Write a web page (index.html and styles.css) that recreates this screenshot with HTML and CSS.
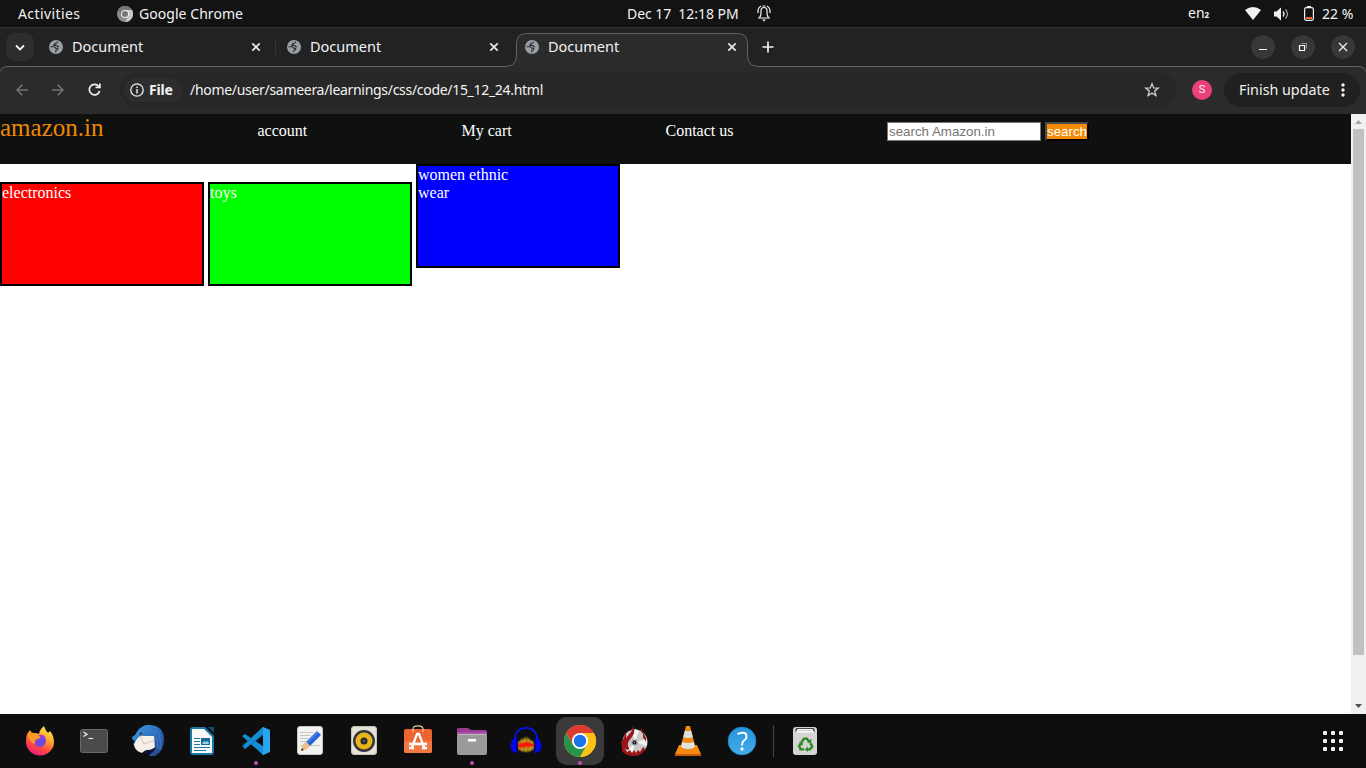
FILE: index.html
```html
<!DOCTYPE html>
<html lang="en">
<head>
<meta charset="utf-8">
<title>Document</title>
<link rel="stylesheet" href="styles.css">
</head>
<body>
<svg class="defs" width="0" height="0">
  <symbol id="globe" viewBox="0 0 14 14"><circle cx="7" cy="7" r="7" fill="#9aa0a6"/><path d="M1.500 6.800H4.800Q6.300 6.900 6.600 8.200H8.600V9.600L6.800 10.300V12.300Q1.600 12 1.500 6.800ZM8.300 1.600V2.400Q8 3.300 6.800 3.300H6V4.500H4.800V5.500H7.600Q8.600 5.600 8.700 6.800H10.200Q11 7 11.200 8.200H12.400Q12.900 3 8.300 1.600Z" fill="#9aa0a6"/><path d="M1.500 6.800H4.800Q6.300 6.900 6.600 8.200H8.600V9.600L6.800 10.300V12.400M8.300 1.600V2.400Q8 3.300 6.800 3.300H6V4.700H4.800V5.500H7.600Q8.600 5.600 8.700 6.800H10.200" fill="none" stroke="#282a2d" stroke-width="1.100"/></symbol>
  <symbol id="close" viewBox="0 0 10 10"><path d="M1.300 1.300 8.700 8.700M8.700 1.300 1.300 8.700" stroke="#e8e8e8" stroke-width="1.700"/></symbol>
</svg>

<header class="topbar">
  <span class="activities">Activities</span>
  <svg class="app-icon" width="16" height="16" viewBox="0 0 16 16"><circle cx="8" cy="8" r="8" fill="#8b8b8b"/><path d="M8 4H15A8 8 0 0 1 8 16L11.500 10Z" fill="#c8c8c8"/><path d="M1 4A8 8 0 0 1 15 4H8L4.500 10Z" fill="#777"/><circle cx="8" cy="8" r="4" fill="#eee"/><circle cx="8" cy="8" r="3" fill="#777"/></svg>
  <span class="app-name">Google Chrome</span>
  <span class="clock">Dec 17&nbsp; 12:18 PM</span>
  <svg class="bell" width="14" height="17" viewBox="0 0 14 17"><path d="M2.500 12.500Q4 11 4 8V6Q4 2.500 7 2.500T10 6V8Q10 11 11.500 12.500M1 13H13M1 8V5Q1.500 2.500 4 1M13 8V5Q12.500 2.500 10 1M5.500 1H8.500" fill="none" stroke="#f2f2f2" stroke-width="1.200"/><path d="M5 14.500H9L7 16.500Z" fill="#f2f2f2"/></svg>
  <span class="lang">en<small>2</small></span>
  <svg class="wifi" width="16" height="13" viewBox="0 0 16 13"><path d="M0 3Q8-3 16 3L8 13Z" fill="#f2f2f2"/></svg>
  <svg class="sound" width="16" height="14" viewBox="0 0 16 14"><path d="M0 4.500H2.500L7 .5V13.500L2.500 9.500H0Z" fill="#f2f2f2"/><path d="M9 4.500Q11 7 9 9.500" fill="none" stroke="#eee" stroke-width="1.300"/><path d="M11.500 2.500Q15.500 7 11.500 11.500" fill="none" stroke="#aaa" stroke-width="1.200"/></svg>
  <svg class="battery" width="10" height="15" viewBox="0 0 10 15"><rect x=".6" y="1.600" width="8.800" height="12.800" rx="1.800" fill="none" stroke="#f2f2f2" stroke-width="1.200"/><path d="M3 0H7V2H3Z" fill="#f2f2f2"/><path d="M2 11H8V13H2Z" fill="#ed6b33"/></svg>
  <span class="percent">22 %</span>
</header>

<section class="browser">
  <svg class="frame" width="1366" height="86" viewBox="0 28 1366 86"><path d="M-1 116V74.500Q0 66.500 8 66.500H505Q516.500 66.500 516.500 55V43.500Q516.500 33.500 526.500 33.500H737.500Q747.500 33.500 747.500 43.500V55Q747.500 66.500 759 66.500H1358Q1366 66.500 1367 74.500V116Z" fill="#2b2b2b" stroke="#626262"/></svg>
  <div class="tabs">
    <span class="tab-menu"><svg width="10" height="7" viewBox="0 0 10 7"><path d="M1 1.500 5 5.500 9 1.500" fill="none" stroke="#f2f2f2" stroke-width="1.800"/></svg></span>
    <div class="tab"><svg class="globe"><use href="#globe"/></svg><span>Document</span><svg class="close"><use href="#close"/></svg></div>
    <div class="tab divided"><svg class="globe"><use href="#globe"/></svg><span>Document</span><svg class="close"><use href="#close"/></svg></div>
    <div class="tab"><svg class="globe"><use href="#globe"/></svg><span>Document</span><svg class="close"><use href="#close"/></svg></div>
    <svg class="plus" width="12" height="12" viewBox="0 0 12 12"><path d="M6 .5V11.500M.5 6H11.500" stroke="#eee" stroke-width="1.700"/></svg>
    <div class="window-buttons">
      <span><svg width="10" height="10" viewBox="0 0 10 10"><path d="M1 7.500H9" stroke="#fff"/></svg></span>
      <span><svg width="10" height="10" viewBox="0 0 10 10"><path d="M3.500 1.500H8.500V6.500" fill="none" stroke="#999"/><path d="M1.500 3.500H6.500V8.500H1.500Z" fill="none" stroke="#fff" stroke-width="1.200"/></svg></span>
      <span><svg width="10" height="10" viewBox="0 0 10 10"><path d="M1 1 9 9M9 1 1 9" stroke="#eee" stroke-width="1.300"/></svg></span>
    </div>
  </div>
  <div class="toolbar">
    <svg class="arrow" width="12" height="12" viewBox="0 0 12 12"><path d="M12 6H1.200M6.300 .8 1.100 6 6.300 11.200" fill="none" stroke="#747474" stroke-width="1.500"/></svg>
    <svg class="arrow" width="12" height="12" viewBox="0 0 12 12"><path d="M0 6H10.800M5.700 .8 10.900 6 5.700 11.200" fill="none" stroke="#747474" stroke-width="1.500"/></svg>
    <svg class="reload" width="13" height="13" viewBox="0 0 13 13"><path d="M10.700 3.500A5.200 5.200 0 1 0 11.600 8M11.900 .5V4.500H7.500" fill="none" stroke="#f2f2f2" stroke-width="1.700"/></svg>
    <div class="address">
      <span class="file"><svg width="14" height="14" viewBox="0 0 14 14"><circle cx="7" cy="7" r="6.200" fill="none" stroke="#eee" stroke-width="1.300"/><path d="M7 6V10.500M7 3.500V5" stroke="#eee" stroke-width="1.400"/></svg><b>File</b></span>
      <span class="url">/home/user/sameera/learnings/css/code/15_12_24.html</span>
      <svg class="star" width="16" height="16" viewBox="0 0 16 16"><path d="M8 1.800 9.700 5.900 14.200 6.200 10.700 9.100 11.900 13.500 8 11.100 4.100 13.500 5.300 9.100 1.800 6.200 6.300 5.900Z" fill="none" stroke="#c6c6c6" stroke-width="1.400"/></svg>
    </div>
    <span class="avatar">S</span>
    <div class="update"><span>Finish update</span><svg width="4" height="14" viewBox="0 0 4 14"><g fill="#f2f2f2"><circle cx="2" cy="2" r="1.700"/><circle cx="2" cy="7" r="1.700"/><circle cx="2" cy="12" r="1.700"/></g></svg></div>
  </div>
</section>

<main class="viewport">
  <div class="page">
    <nav class="nav">
      <span class="logo">amazon.in</span>
      <span class="account">account</span>
      <span class="cart">My cart</span>
      <span class="contact">Contact us</span>
      <input class="search" type="text" placeholder="search Amazon.in">
      <button class="go">search</button>
    </nav>
    <div class="categories">
      <div class="box red">electronics</div>
      <div class="box green">toys</div>
      <div class="box blue">women ethnic<br>wear</div>
    </div>
  </div>
  <div class="scrollbar">
    <svg width="15" height="15" viewBox="0 0 15 15"><path d="M4 10H11L7.500 6Z" fill="#a3a3a3"/></svg>
    <div class="thumb"></div>
    <svg class="down" width="15" height="15" viewBox="0 0 15 15"><path d="M4 5H11L7.500 9Z" fill="#505050"/></svg>
  </div>
</main>

<footer class="dock">
  <span class="slot"><svg viewBox="0 0 32 32"><defs><linearGradient id="ff" x1=".8" y1="0" x2=".3" y2="1"><stop offset="0" stop-color="#fff34f"/><stop offset=".4" stop-color="#ffa22c"/><stop offset=".7" stop-color="#ff4b3e"/><stop offset="1" stop-color="#e9197f"/></linearGradient></defs><path d="M3 9 6 5Q7 8 10 8Q13 8 15 9Q16 4 20 1Q21 5 24 8L26 6Q30 11 30 17A14 13.500 0 0 1 2 17Q2 12 3 9Z" fill="url(#ff)"/><circle cx="16" cy="16" r="6" fill="#7647dd"/><path d="M4 10Q9 7 12 10L17 11Q16 14 13 14Q10 16 11 19Q5 17 4 10Z" fill="#ff9a28"/><path d="M15 10Q20 9 22 13Q20 11 16 12" fill="#b833d1"/></svg></span>
  <span class="slot"><svg viewBox="0 0 32 32"><rect x="2.500" y="4.500" width="27" height="23" rx="2" fill="#4b4b4b" stroke="#696969"/><path d="M5.500 7 9 9.200 5.500 11.500M10.500 13.500H15" fill="none" stroke="#f4f4f4" stroke-width="1.200"/></svg></span>
  <span class="slot"><svg viewBox="0 0 32 32"><defs><linearGradient id="tb" x1="0" y1="0" x2="1" y2="1"><stop offset="0" stop-color="#3aa2e8"/><stop offset=".55" stop-color="#2b68b8"/><stop offset="1" stop-color="#283f86"/></linearGradient></defs><path d="M0 12 3 10Q7 2 14 0Q32-1 32 15Q32 26 23 31L17 31 20 27Q8 30 1 19L3 16Q0 15 0 12Z" fill="url(#tb)"/><path d="M2 20Q4 14 8 11L22 11 23 24 17 25Q13 25 10 28 3 26 2 20Z" fill="#f5f1e9"/><path d="M8 11 12 19 23 15" fill="none" stroke="#c8beb0" stroke-width=".9"/><path d="M10 28Q14 24 18 25L24 22Q22 28 17 29Z" fill="#101536"/><circle cx="9" cy="9" r="1.500" fill="#172b50"/><circle cx="9.500" cy="10" r=".8" fill="#e9b450"/><path d="M17 4Q27 8 26 24M23 4Q30 10 28 25" fill="none" stroke="#4b8bd5" stroke-width=".7"/></svg></span>
  <span class="slot"><svg viewBox="0 0 32 32"><path d="M7 2H19L28 11V27Q28 30 25 30H7Q4 30 4 27V5Q4 2 7 2Z" fill="#187aa7"/><path d="M8 4H18L26 12V28H6V4Z" fill="#fafafa"/><path d="M22 2H28V8Z" fill="#164f6e"/><path d="M8 13.500H14M8 16.500H14M8 19.500H14M8 22.500H24M8 25.500H20" stroke="#187aa7"/><rect x="15" y="13" width="9" height="7" fill="#146b95"/><path d="M16 19 18 16 20 17 22 16 23 19Z" fill="#99d5ef"/></svg></span>
  <span class="slot running"><svg viewBox="0 0 32 32"><path d="M2 11 5 9 30 26 23 30Z" fill="#178dd3"/><path d="M2 21 5 24 26 8 23 2Z" fill="#076ead"/><path d="M23 2 30 5V27L23 30Z" fill="#2aa5ef"/><path d="M3 21 23 2V9L5 24Z" fill="#168bd1"/></svg></span>
  <span class="slot"><svg viewBox="0 0 32 32"><rect x="3.500" y="1.500" width="25" height="28" rx="2.500" fill="#f2f2f1" stroke="#c9c5c1"/><path d="M6 7.500H19M6 10.500H17M6 13.500H14M6 16.500H12M6 20.500H26" stroke="#bdb9ae" stroke-width=".8"/><path d="M12 17 23 6 27 10 16 21Z" fill="#2864da"/><path d="M7 26 9 19 12 17 16 21 13 24Z" fill="#f4bd82"/><path d="M7 26 8 23 10 25Z" fill="#333"/><path d="M13 18 24 7" stroke="#5997ff"/></svg></span>
  <span class="slot"><svg viewBox="0 0 32 32"><rect x="3.500" y="1.500" width="25" height="28" rx="2.500" fill="#e6e1d7" stroke="#c8c3b8"/><circle cx="16" cy="16" r="11" fill="#33353a"/><circle cx="16" cy="16" r="8.500" fill="#eab51b"/><circle cx="16" cy="16" r="3.500" fill="#25282c"/><circle cx="16" cy="16" r="1.500" fill="#555"/></svg></span>
  <span class="slot"><svg viewBox="0 0 32 32"><rect x="2" y="4" width="28" height="24" rx="2" fill="#ec6430"/><path d="M2 16H30V26Q30 28 28 28H4Q2 28 2 26Z" fill="#f17a43"/><path d="M11 7V4Q11 .8 16 .8T21 4V7" fill="none" stroke="#ecd3a5" stroke-width="1.200"/><path d="M9.500 23.500 15 9H17L22.500 23.500M7 19H25M7 23H12M20 23H25" fill="none" stroke="#fff" stroke-width="2.300"/></svg></span>
  <span class="slot running"><svg viewBox="0 0 32 32"><path d="M1 4Q1 3 3 3H12L15 5H29Q31 5 31 7V12H1Z" fill="#953d94"/><path d="M1 8H31" stroke="#c065b9"/><rect x="1" y="9" width="30" height="21" rx="2" fill="#9a9a9a"/><path d="M2 9.500H30" stroke="#bebebe"/><rect x="12" y="14" width="8" height="2.500" rx=".5" fill="#fff"/></svg></span>
  <span class="slot"><svg viewBox="0 0 32 32"><path d="M5 20Q3 3 16 3T27 20" fill="none" stroke="#0712dc" stroke-width="2"/><path d="M8 19 9 15 10 17 11 13 12 16 13 12 14 15 15 11 16 15 17 11 18 15 19 12 20 16 21 14 22 17 23 15 24 19V22L23 26 22 24 21 27 20 25 19 28 18 25 17 28 16 26 15 28 14 25 13 28 12 25 11 27 10 24 9 26 8 22Z" fill="#b88e1a"/><path d="M7 20 9 19 10 17 12 19 13 17 15 18 17 16 18 18 20 17 21 19 23 18 25 20 23 22 20 21 18 23 16 21 14 23 12 22 10 23Z" fill="#fa180d"/><path d="M7 12V28Q1 28 .5 21 1 13 7 12ZM25 12V28Q31 28 31.500 21 31 13 25 12Z" fill="#0207e9"/><path d="M7 12V28M25 12V28" stroke="#050877" stroke-width="1.800"/></svg></span>
  <span class="slot running active"><svg viewBox="0 0 32 32"><circle cx="16" cy="16" r="16" fill="#fbc116"/><path d="M2.140 8A16 16 0 0 1 29.860 8H16L9.070 20Z" fill="#dc3b30"/><path d="M2.140 8 9.070 20H22.930L16 32A16 16 0 0 1 2.140 8Z" fill="#279449"/><path d="M16 8H29.860A16 16 0 0 1 16 32L22.930 20Z" fill="#fbc116"/><circle cx="16" cy="16" r="8" fill="#fff"/><circle cx="16" cy="16" r="6.200" fill="#1a73e8"/></svg></span>
  <span class="slot"><svg viewBox="0 0 32 32"><circle cx="17" cy="17" r="12.500" fill="#c9c9c9"/><path d="M17 17 13 5Q18 3 21 6ZM17 17 29 14V21ZM17 17 8 27 15 29Z" fill="#f3f3f3"/><path d="M4 22Q2 16 6 13L7 7Q9 10 8 13L13 7 15 1Q18 7 14 12Q9 17 10 21 12 24 10 25L7 24ZM23 3Q22 6 25 9L25 13Q27 14 28 17 29 14 27 11ZM4 19 6 24 9 27 12 25 14 28 16 25 18 28 20 25 22 27 25 22 27 24Q25 30 17 31 7 31 4 26Z" fill="#9e1519"/><circle cx="16.500" cy="17.500" r="3.300" fill="#aaa"/><circle cx="16.500" cy="17.500" r="2" fill="#171717"/><circle cx="16.500" cy="17.500" r=".7" fill="#aaa"/></svg></span>
  <span class="slot"><svg viewBox="0 0 32 32"><path d="M7 20H25L29 29V31H3V29Z" fill="#f58911"/><path d="M3 29H29V31H3Z" fill="#c75a05"/><path d="M14 1H18L24 24Q16 29 8 24Z" fill="#f58a13"/><path d="M12.800 6H19.200L20.700 12Q16 14 11.300 12ZM10.200 17Q16 19 21.800 17L23 22Q16 26 9 22Z" fill="#dfe2e5"/></svg></span>
  <span class="slot"><svg viewBox="0 0 32 32"><defs><linearGradient id="help" x2="0" y2="1"><stop stop-color="#2595db"/><stop offset="1" stop-color="#45ace9"/></linearGradient></defs><circle cx="16" cy="16" r="14" fill="url(#help)" stroke="#1d79b5" stroke-width=".5"/><path d="M11.500 9Q20.500 5.500 20.500 11.500 20.500 14 17.500 16 16 17.500 16 20.500" fill="none" stroke="#fff" stroke-width="1.900"/><circle cx="16" cy="24" r="1.700" fill="#fff"/></svg></span>
  <span class="separator"></span>
  <span class="slot trash"><svg viewBox="0 0 32 32"><rect x="4" y="2" width="24" height="28" rx="3" fill="#d4d4d2"/><path d="M6.500 7V4.500Q6.500 3 8 3H24Q25.500 3 25.500 4.500V7Z" fill="#444"/><path d="M8.500 4H23.500L25 7.500H7Z" fill="#fff"/><path d="M9 5.500H23" stroke="#ccc"/><g transform="translate(1.600 1.900) scale(.9)"><path d="M12 17 15 13H18L21 17M22 18 24 22 21.500 25H18M15 25H11L9.500 21 12 18" fill="none" stroke="#2b8a20" stroke-width="2.700"/><path d="M18.500 17.500H23V13ZM19 21.500V28L15.800 25ZM9 17H13.500V21Z" fill="#2b8a20"/></g></svg></span>
  <svg class="apps" width="21" height="21" viewBox="0 0 21 21"><g fill="#f2f2f2"><rect x="0" y="0" width="4" height="4" rx="1"/><rect x="8" y="0" width="4" height="4" rx="1"/><rect x="16" y="0" width="4" height="4" rx="1"/><rect x="0" y="8" width="4" height="4" rx="1"/><rect x="8" y="8" width="4" height="4" rx="1"/><rect x="16" y="8" width="4" height="4" rx="1"/><rect x="0" y="16" width="4" height="4" rx="1"/><rect x="8" y="16" width="4" height="4" rx="1"/><rect x="16" y="16" width="4" height="4" rx="1"/></g></svg>
</footer>
</body>
</html>
```
FILE: styles.css
```css
* { box-sizing: border-box; }
body { margin: 0; width: 1366px; height: 768px; overflow: hidden; background: #fff; display: flex; flex-direction: column; }
svg { display: block; flex: none; }
.defs { position: absolute; }
.topbar, .browser { font-family: "Noto Sans", "Open Sans", sans-serif; color: #f2f2f2; font-size: 14px; line-height: 20px; white-space: nowrap; }

.topbar { height: 27px; flex: none; background: #131313; display: flex; align-items: center; }
.activities { width: 63px; margin-left: 18px; letter-spacing: .4px; }
.app-icon { margin-left: 36px; }
.app-name { width: 104px; margin-left: 6px; letter-spacing: .05px; }
.clock { width: 113px; margin-left: 384px; letter-spacing: -.05px; }
.bell { margin-left: 17px; }
.lang { width: 23px; margin-left: 417px; }
.lang small { font-size: 8px; font-weight: bold; }
.wifi { margin-left: 34px; }
.sound { margin-left: 13px; }
.battery { margin-left: 14px; }
.percent { margin-left: 8px; }

.browser { height: 87px; flex: none; position: relative; background: #222; border-top: 1px solid #303030; border-bottom: 1px solid #1d1d1d; }
.frame { position: absolute; left: 0; top: 0; }
.tabs { position: relative; height: 38px; display: flex; align-items: center; font-size: 14.5px; }
.tab-menu { width: 28px; height: 28px; margin-left: 6px; border-radius: 9px; background: #2d2d2d; display: flex; align-items: center; justify-content: center; }
.tab { width: 238px; height: 28px; padding-left: 15px; display: flex; align-items: center; }
.divided { background: linear-gradient(#363636, #363636) 3px 6px / 1px 16px no-repeat; }
.globe { width: 14px; height: 14px; }
.tab span { width: 179px; padding: 0 0 2px 9px; }
.close { width: 10px; height: 10px; margin-left: 9px; }
.plus { margin-left: 14px; }
.window-buttons { margin-left: auto; margin-right: 11px; display: flex; gap: 16px; }
.window-buttons span { width: 24px; height: 24px; border-radius: 50%; background: #373737; display: flex; align-items: center; justify-content: center; }

.toolbar { position: relative; height: 47px; display: flex; align-items: center; padding-left: 16px; }
.arrow + .arrow { margin-left: 24px; }
.reload { margin-left: 24px; }
.address { margin-left: 19px; width: 1056px; height: 34px; border-radius: 17px; background: #272727; display: flex; align-items: center; }
.file { margin-left: 4px; width: 58px; height: 24px; border-radius: 12px; background: #2d2d2d; padding-left: 6px; display: flex; align-items: center; gap: 5px; }
.file b { font-size: 14px; letter-spacing: -.2px; }
.url { margin-left: 8px; letter-spacing: -.3px; }
.star { margin-left: auto; margin-right: 16px; }
.avatar { width: 20px; height: 20px; margin-left: 16px; border-radius: 50%; background: #ec407a; text-align: center; font: 11px/20px Roboto, sans-serif; }
.update { width: 136px; height: 34px; margin-left: 12px; padding-left: 15px; border-radius: 17px; background: #202020; display: flex; align-items: center; font-size: 14.3px; }
.update svg { margin-left: auto; margin-right: 15px; }

.viewport { height: 600px; flex: none; display: flex; }
.page { width: 1351px; font: 16px "Liberation Serif", serif; color: #fff; }
.nav { height: 50px; background: #0f1110; display: flex; align-items: baseline; }
.logo { width: 104px; color: #f08804; font-size: 25px; line-height: 28px; }
.account { width: 50px; margin-left: 153.5px; }
.cart { width: 51px; margin-left: 154px; }
.contact { width: 68px; margin-left: 153px; }
.search { width: 154px; height: 19px; margin: 0 0 0 153.5px; padding: 1px; border: 1px solid #767676; background: #fff; font: 13.333px "Liberation Sans", sans-serif; }
.search::placeholder { color: #757575; }
.go { width: 44px; height: 19px; margin: 0 0 0 4px; padding: 0; border: 2px solid; border-color: #4c4c4c #000 #000 #4c4c4c; background: #f58b06; color: #fff; font: 13.333px/15px "Liberation Sans", sans-serif; }
.box { display: inline-block; width: 204px; height: 104px; border: 2px solid #000; }
.red { background: #f00; }
.green { background: #0f0; }
.blue { background: #00f; }
.scrollbar { width: 15px; background: #f1f1f1; display: flex; flex-direction: column; }
.thumb { height: 526px; margin: 0 2px; background: #c1c1c1; }
.down { margin-top: auto; }

.dock { height: 54px; flex: none; background: #0e0e0e; padding-left: 13px; display: flex; align-items: center; }
.slot { width: 54px; height: 54px; position: relative; display: flex; align-items: center; justify-content: center; }
.slot svg { position: relative; width: 32px; height: 32px; }
.running::after { content: ""; position: absolute; left: 25px; top: 47px; width: 4px; height: 4px; border-radius: 50%; background: #c050b8; }
.active::before { content: ""; position: absolute; inset: 3px; border-radius: 11px; background: #3a3a3a; }
.separator { width: 1px; height: 32px; margin-left: 4px; background: #454545; }
.trash { margin-left: 4px; }
.apps { margin-left: auto; margin-right: 22px; }
```
